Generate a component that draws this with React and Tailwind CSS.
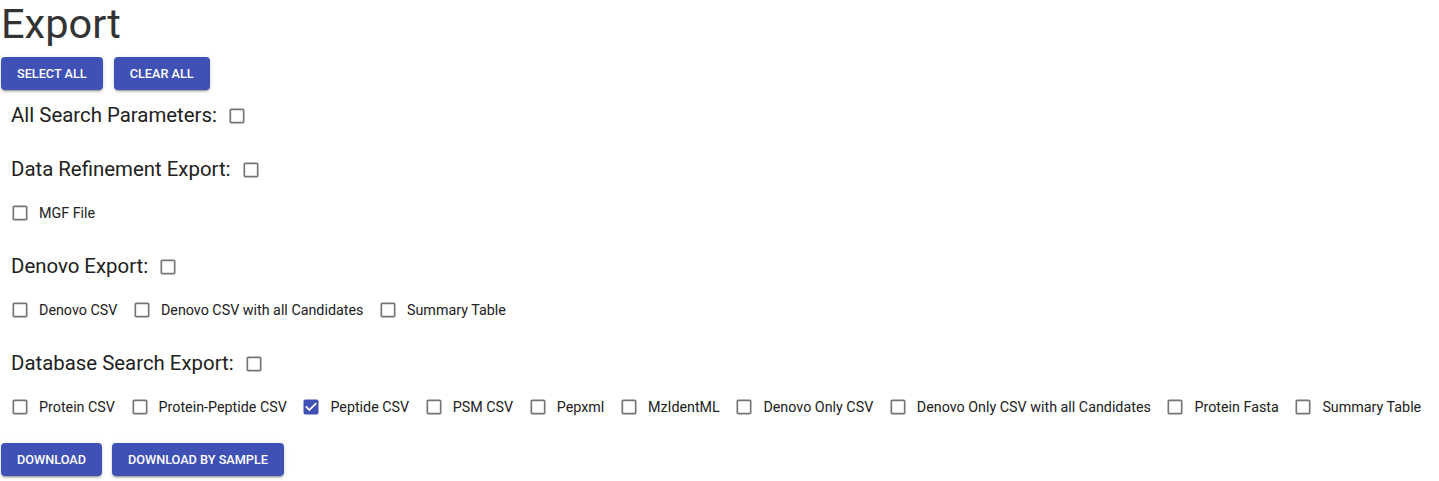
import React, { useState } from "react";

const sections = [
  { title: "All Search Parameters:", items: [] },
  { title: "Data Refinement Export:", items: ["MGF File"] },
  {
    title: "Denovo Export:",
    items: ["Denovo CSV", "Denovo CSV with all Candidates", "Summary Table"],
  },
  {
    title: "Database Search Export:",
    items: [
      "Protein CSV",
      "Protein-Peptide CSV",
      "Peptide CSV",
      "PSM CSV",
      "Pepxml",
      "MzIdentML",
      "Denovo Only CSV",
      "Denovo Only CSV with all Candidates",
      "Protein Fasta",
      "Summary Table",
    ],
  },
];

const Box = ({ checked }) =>
  checked ? (
    <svg viewBox="0 0 24 24" className="w-5 h-5 shrink-0 fill-[#3f51b5]">
      <path d="M19 3H5c-1.11 0-2 .9-2 2v14c0 1.1.89 2 2 2h14c1.11 0 2-.9 2-2V5c0-1.1-.89-2-2-2zm-9 14l-5-5 1.41-1.41L10 14.17l7.59-7.59L19 8l-9 9z" />
    </svg>
  ) : (
    <svg viewBox="0 0 24 24" className="w-5 h-5 shrink-0 fill-[#757575]">
      <path d="M19 5v14H5V5h14m0-2H5c-1.11 0-2 .9-2 2v14c0 1.1.89 2 2 2h14c1.1 0 2-.9 2-2V5c0-1.1-.9-2-2-2z" />
    </svg>
  );

const Btn = ({ children }) => (
  <button className="h-[33px] px-4 rounded bg-[#3f51b5] text-white text-[12.7px] font-medium tracking-normal uppercase shadow-[0_3px_1px_-2px_rgba(0,0,0,0.2),0_2px_2px_0_rgba(0,0,0,0.14),0_1px_5px_0_rgba(0,0,0,0.12)]">
    {children}
  </button>
);

export default function App() {
  const [checked, setChecked] = useState({ "Database Search Export:Peptide CSV": true });

  const toggle = (key) => setChecked((c) => ({ ...c, [key]: !c[key] }));

  return (
    <div
      className="min-h-screen bg-white text-[#212121]"
      style={{ fontFamily: "Roboto, 'Liberation Sans', sans-serif" }}>
      <h1 className="text-[41.5px] leading-[48px] font-normal text-[#333333] pl-[1px]">Export</h1>

      <div className="flex gap-[11px] mt-[9px] ml-px">
        <Btn>Select All</Btn>
        <Btn>Clear All</Btn>
      </div>

      <div className="mt-[5px]">
        {sections.map((s, i) => (
          <div key={s.title} className={i === 0 ? "" : "mt-[12px]"}>
            <div className="h-[42px] flex items-center pl-[11px] gap-[10px]">
              <span className="text-[20.4px] leading-[24px] -mt-[2px]">{s.title}</span>
              <button onClick={() => toggle(s.title)}>
                <Box checked={!!checked[s.title]} />
              </button>
            </div>
            {s.items.length > 0 && (
              <div className="h-[42px] mt-px flex items-center pl-[10px] gap-[14.6px]">
                {s.items.map((it) => {
                  const key = s.title + it;
                  return (
                    <label
                      key={it}
                      className="flex items-center gap-[9px] cursor-pointer"
                      onClick={() => toggle(key)}>
                      <Box checked={!!checked[key]} />
                      <span className="text-[14.3px] leading-5">{it}</span>
                    </label>
                  );
                })}
              </div>
            )}
          </div>
        ))}
      </div>

      <div className="flex gap-[10px] mt-[15px] ml-px">
        <Btn>Download</Btn>
        <Btn>Download by Sample</Btn>
      </div>
    </div>
  );
}
